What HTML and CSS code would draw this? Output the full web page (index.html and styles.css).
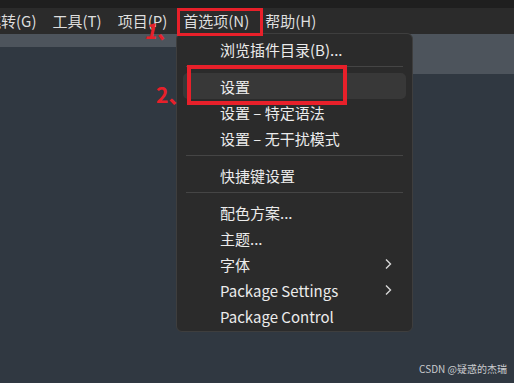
FILE: index.html
```html
<!DOCTYPE html>
<html lang="zh-CN">
<head>
<meta charset="utf-8">
<link rel="stylesheet" href="styles.css">
</head>
<body>
<div class="app">
  <div class="titlestrip"></div>
  <nav class="menubar">
    <span class="mitem first">跳转(G)</span>
    <span class="mitem">工具(T)</span>
    <span class="mitem">项目(P)</span>
    <span class="mitem open">首选项(N)</span>
    <span class="mitem">帮助(H)</span>
  </nav>
  <div class="tabbar">
    <div class="tab active"></div>
  </div>
  <div class="editor"></div>

  <div class="dropdown">
    <div class="row">浏览插件目录(B)...</div>
    <div class="sep"></div>
    <div class="row hover">设置</div>
    <div class="row">设置 – 特定语法</div>
    <div class="row">设置 – 无干扰模式</div>
    <div class="sep"></div>
    <div class="row">快捷键设置</div>
    <div class="sep"></div>
    <div class="row">配色方案...</div>
    <div class="row">主题...</div>
    <div class="row sub">字体<svg class="chev" viewBox="0 0 8 12" width="8" height="12"><path d="M2 1.5 L6.5 6 L2 10.5" fill="none" stroke="#d8d8d8" stroke-width="1.4"/></svg></div>
    <div class="row sub">Package Settings<svg class="chev" viewBox="0 0 8 12" width="8" height="12"><path d="M2 1.5 L6.5 6 L2 10.5" fill="none" stroke="#d8d8d8" stroke-width="1.4"/></svg></div>
    <div class="row">Package Control</div>
  </div>

  <div class="mark box1"></div>
  <div class="mark box2"></div>
  <div class="note n1">1、</div>
  <div class="note n2">2、</div>
  <div class="watermark">CSDN @疑惑的杰瑞</div>
</div>
</body>
</html>
```

FILE: styles.css
```css
html, body {
  margin: 0;
  padding: 0;
  background: #303841;
}
.app {
  position: relative;
  width: 514px;
  height: 383px;
  overflow: hidden;
  display: flex;
  flex-direction: column;
  font-family: "Noto Sans CJK SC", "Noto Sans", sans-serif;
}
.titlestrip {
  height: 8px;
  background: #1f1f1f;
}
.menubar {
  height: 26px;
  background: #2b2b2b;
  display: flex;
  align-items: center;
  gap: 16px;
  padding-left: 0;
  color: #dedede;
  font-size: 15px;
  white-space: nowrap;
}
.mitem {
  line-height: 26px;
}
.mitem.first {
  margin-left: -14px;
}
.tabbar {
  height: 40px;
  background: #4d545c;
  display: flex;
  align-items: flex-end;
}
.tab.active {
  width: 320px;
  height: 27px;
  background: #303841;
}
.editor {
  flex: 1;
  background: #303841;
}
.dropdown {
  position: absolute;
  left: 176px;
  top: 33px;
  width: 235px;
  padding: 2px 0 2px;
  background: #2b2b2b;
  border: 1px solid #3e3e3e;
  border-radius: 6px;
  color: #ececec;
  font-size: 15px;
}
.row {
  height: 26px;
  margin: 0 6px;
  padding: 0 14px 0 37px;
  display: flex;
  align-items: center;
  justify-content: space-between;
  border-radius: 5px;
  white-space: nowrap;
}
.row.hover {
  background: #383838;
}
.sep {
  height: 1px;
  background: #454545;
  margin: 4px 9px 6px 9px;
}
.mark {
  position: absolute;
  border: 3px solid #e8202a;
}
.box1 {
  left: 177px;
  top: 8px;
  width: 80px;
  height: 22px;
}
.box2 {
  left: 187px;
  top: 65px;
  width: 152px;
  height: 32px;
  border-width: 4px;
}
.note {
  position: absolute;
  color: #e8202a;
  font-weight: 700;
  font-size: 21px;
  font-family: "Noto Sans CJK SC", sans-serif;
  line-height: 1;
}
.n1 {
  left: 146px;
  top: 20px;
  transform: skewX(-12deg);
}
.n2 {
  left: 156px;
  top: 84px;
}
.watermark {
  position: absolute;
  right: 7px;
  bottom: 7px;
  font-size: 10px;
  color: #c9cbce;
  font-family: "Noto Sans CJK SC", sans-serif;
}
```
